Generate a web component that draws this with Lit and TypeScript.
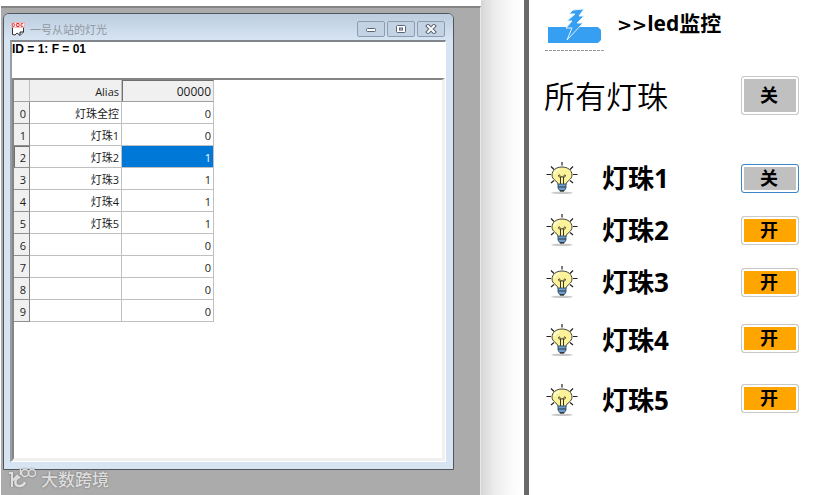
import { LitElement, html, css, svg } from "lit";
import { customElement, state } from "lit/decorators.js";
import { classMap } from "lit/directives/class-map.js";

interface Lamp {
  name: string;
  off: boolean;
  focused?: boolean;
  roomy?: boolean;
}

@customElement("register-window")
export class RegisterWindow extends LitElement {
  static styles = css`
    :host {
      display: flex;
      flex-direction: column;
      box-sizing: border-box;
      border: 1px solid #50565e;
      border-radius: 6px 6px 0 0;
      background: #d7e4f2;
      padding: 0 7px 7px 6px;
      overflow: hidden;
      font-family: "Noto Sans CJK SC", sans-serif;
    }
    .titlebar {
      display: flex;
      align-items: center;
      height: 26px;
      flex: none;
      margin: 0 -7px 0 -6px;
      padding: 4px 8px 0 7px;
      box-sizing: border-box;
      background: linear-gradient(#bccddf, #d7e4f2);
    }
    .doc {
      width: 14px;
      height: 14px;
      flex: none;
    }
    .title {
      flex: 1;
      margin: 0 0 0 5px;
      font-size: 11px;
      font-weight: 400;
      line-height: 16px;
      color: #9097a0;
    }
    .controls {
      display: flex;
      gap: 2px;
    }
    .controls button {
      width: 28px;
      height: 16px;
      padding: 0;
      display: grid;
      place-items: center;
      border: 1px solid #8d9cb3;
      border-radius: 2px;
      background: #c4d3e4;
    }
    .controls svg {
      width: 12px;
      height: 10px;
      display: block;
    }
    .client {
      flex: 1;
      display: flex;
      flex-direction: column;
      border: 1px solid #ffffff;
      border-top: 2px solid #82868c;
      border-left: 2px solid #9a9da2;
      background: #ffffff;
    }
    .status {
      margin: 0;
      height: 36px;
      font: bold 12px/14px "Liberation Sans", Arial, sans-serif;
      color: #000000;
    }
    .sheet {
      flex: 1;
      border-top: 2px solid #858585;
      border-left: 2px solid #858585;
      border-right: 3px solid #f0f0f0;
      border-bottom: 3px solid #f0f0f0;
    }
    table {
      border-collapse: separate;
      border-spacing: 0;
      table-layout: fixed;
      width: 200px;
      font-family: "Open Sans", "Noto Sans CJK SC", sans-serif;
      font-size: 11px;
      line-height: 16px;
      color: #1c1c1c;
    }
    .index {
      width: 16px;
    }
    th,
    td {
      box-sizing: border-box;
      height: 22px;
      padding: 2px 2px 0 0;
      text-align: right;
      font-weight: 400;
      border-right: 1px solid #c0c0c0;
      border-bottom: 1px solid #c0c0c0;
      white-space: nowrap;
    }
    thead th {
      background: #f0f0f0;
      border-bottom-color: #a0a0a0;
    }
    thead .address {
      border-left: 1px solid #707070;
      border-top: 1px solid #707070;
      padding-top: 1px;
      font-size: 12px;
    }
    tbody th {
      background: #f0f0f0;
      border-right-color: #808080;
      border-bottom-color: #909090;
      padding: 2px 3px 0 0;
    }
    tbody .current th {
      border-left: 1px solid #707070;
      border-top: 1px solid #707070;
      padding-top: 1px;
    }
    .current .value {
      background: #0078d7;
      color: #ffffff;
    }
  `;

  private rows = [
    ["灯珠全控", 0],
    ["灯珠1", 0],
    ["灯珠2", 1],
    ["灯珠3", 1],
    ["灯珠4", 1],
    ["灯珠5", 1],
    ["", 0],
    ["", 0],
    ["", 0],
    ["", 0],
  ];

  render() {
    return html`
      <header class="titlebar">
        <svg class="doc" viewBox="0 0 14 14" aria-hidden="true">
          <path d="M1.500 1H12.500V10L9.500 13L7 11.500L4 13L1.500 12Z" fill="#fff" />
          <path d="M1.500 5V12.500L4 13L6 11L9 13.500L12.500 10V5" fill="none" stroke="#333" />
          <path d="M9 13V10H12.500" fill="#ddd" stroke="#222" />
          <path d="M.500 .500H13.500V5.500H.500Z" fill="#fff" stroke="#e78a8a" stroke-width=".500" />
          <path d="M1.700 1.500V4.500H2.700L3.900 3.500V2.500L2.700 1.500ZM5.700 1.500H8V4.500H5.700ZM12.300 1.700H10V4.300H12.300" fill="none" stroke="#e01818" stroke-width=".900" />
        </svg>
        <h2 class="title">一号从站的灯光</h2>
        <div class="controls">
          <button aria-label="最小化">
            <svg viewBox="0 0 12 10"><rect x="1.500" y="4.500" width="9" height="3" rx="1" fill="#fff" stroke="#5b6474" /></svg>
          </button>
          <button aria-label="最大化">
            <svg viewBox="0 0 12 10">
              <rect x="1.500" y="1.500" width="9" height="7" rx="1" fill="#fff" stroke="#5b6474" />
              <rect x="4.500" y="4" width="3" height="2" fill="#c4d3e4" stroke="#5b6474" />
            </svg>
          </button>
          <button aria-label="关闭">
            <svg viewBox="0 0 12 10">
              <path d="M3 2L9 8M9 2L3 8" stroke="#5b6474" stroke-width="4" stroke-linecap="square" />
              <path d="M3 2L9 8M9 2L3 8" stroke="#fff" stroke-width="2" stroke-linecap="square" />
            </svg>
          </button>
        </div>
      </header>
      <div class="client">
        <p class="status">ID = 1: F = 01</p>
        <div class="sheet">
          <table>
            <colgroup>
              <col class="index" />
              <col />
              <col />
            </colgroup>
            <thead>
              <tr>
                <th></th>
                <th scope="col">Alias</th>
                <th scope="col" class="address">00000</th>
              </tr>
            </thead>
            <tbody>
              ${this.rows.map(
                ([alias, value], i) => html`<tr class=${classMap({ current: i === 2 })}>
                  <th scope="row">${i}</th>
                  <td>${alias}</td>
                  <td class="value">${value}</td>
                </tr>`
              )}
            </tbody>
          </table>
        </div>
      </div>
    `;
  }
}

const bulb = svg`
  <ellipse cx="16" cy="30.800" rx="11" ry="1.200" fill="#c9c9c9" />
  <path d="M16 0V3.500M5 4.500L8 7.500M27 4.500L24 7.500M.500 12.500H5M27 12.500H31.500M5 21L8 18.500M27 21L24 18.500" stroke="#222" stroke-width="1.200" fill="none" />
  <path d="M16 5C10 5 6 8.500 6 13C6 18 11.500 18.500 12 22.500H20C20.500 18.500 26 18 26 13C26 8.500 22 5 16 5Z" fill="#fbf29a" stroke="#45453a" stroke-width="1" />
  <path d="M8.500 12C9 9.500 11 8 13.500 7.500" fill="none" stroke="#fffde0" stroke-width="1.600" />
  <path d="M14.500 22V15C12 15.500 12 12.500 13.500 13C14.500 13.300 14 15 16 15C18 15 17.500 13.300 18.500 13C20 12.500 20 15.500 17.500 15V22" fill="none" stroke="#3a3528" stroke-width="1" />
  <path d="M12 22H20V26L18.500 28.500H13.500L12 26Z" fill="#6f9fcb" stroke="#35506e" stroke-width=".900" />
  <path d="M12 25H20" stroke="#24384f" stroke-width="1" />
  <path d="M14 29H18" stroke="#222" stroke-width="1.200" />
`;

@customElement("lamp-panel")
export class LampPanel extends LitElement {
  static styles = css`
    :host {
      display: block;
      padding: 0 29px 0 15px;
      font-family: "Open Sans", "Noto Sans CJK SC", sans-serif;
      color: #000000;
    }
    .heading {
      display: flex;
      align-items: center;
      gap: 12px;
      height: 52px;
      padding-left: 1px;
    }
    .logo {
      width: 60px;
      height: 52px;
      flex: none;
    }
    h1 {
      margin: 0;
      padding-bottom: 4px;
      font-size: 21px;
      line-height: 28px;
      font-weight: 700;
      white-space: nowrap;
    }
    .chevrons {
      font-family: "DejaVu Sans", sans-serif;
      font-size: 18px;
    }
    .all {
      display: flex;
      align-items: center;
      justify-content: space-between;
      height: 86px;
      margin-bottom: 14px;
    }
    h2 {
      margin: 0;
      font-family: "Noto Sans CJK SC", sans-serif;
      font-size: 31px;
      line-height: 40px;
      font-weight: 350;
    }
    ul {
      list-style: none;
      margin: 0;
      padding: 0;
    }
    li {
      display: flex;
      align-items: center;
      height: 52px;
    }
    li.roomy {
      height: 60px;
    }
    .bulb {
      width: 32px;
      height: 32px;
      margin-left: 2px;
      flex: none;
    }
    .name {
      flex: 1;
      margin-left: 24px;
      font-size: 26px;
      line-height: 36px;
      font-weight: 700;
    }
    .roomy .bulb,
    .roomy .name {
      padding-top: 4px;
    }
    button {
      width: 58px;
      height: 29px;
      padding: 0 2px 2px 0;
      box-sizing: border-box;
      border: 1px solid #c8c8c8;
      border-radius: 3px;
      background: #ffa500;
      box-shadow: inset 0 0 0 2px #ffffff;
      font: bold 18px/22px "Noto Sans CJK SC", sans-serif;
      color: #000000;
    }
    button.off {
      background: #c0c0c0;
    }
    button.focused {
      border-color: #3a86c8;
    }
    button.large {
      height: 39px;
    }
  `;

  @state() private allOff = true;
  @state() private lamps: Lamp[] = [
    { name: "灯珠1", off: true, focused: true },
    { name: "灯珠2", off: false },
    { name: "灯珠3", off: false },
    { name: "灯珠4", off: false, roomy: true },
    { name: "灯珠5", off: false, roomy: true },
  ];

  private toggle(index: number) {
    this.lamps = this.lamps.map((lamp, i) => ({
      ...lamp,
      off: i === index ? !lamp.off : lamp.off,
      focused: i === index,
    }));
  }

  render() {
    return html`
      <header class="heading">
        <svg class="logo" viewBox="0 0 60 52" aria-hidden="true">
          <path d="M3 27H53L56 30V40L53 43H3Z" fill="#369ff2" />
          <path d="M28 10L39 9L34 16H39L32 23H38L22 40L27 28H21L27 21H22L30 14H24Z" fill="#369ff2" stroke="#e4f4ff" stroke-width="1" />
          <path d="M0 50.500H60" stroke="#999" stroke-dasharray="3 1" />
        </svg>
        <h1><span class="chevrons">&gt;&gt;</span>led监控</h1>
      </header>
      <section class="all">
        <h2>所有灯珠</h2>
        <button
          class=${classMap({ large: true, off: this.allOff })}
          aria-label="所有灯珠 ${this.allOff ? "关" : "开"}"
          @click=${() => (this.allOff = !this.allOff)}
        >
          ${this.allOff ? "关" : "开"}
        </button>
      </section>
      <ul>
        ${this.lamps.map(
          (lamp, i) => html`<li class=${classMap({ roomy: !!lamp.roomy })}>
            <svg class="bulb" viewBox="0 0 32 32" aria-hidden="true">${bulb}</svg>
            <span class="name" id="lamp-${i}">${lamp.name}</span>
            <button
              class=${classMap({ off: lamp.off, focused: !!lamp.focused })}
              aria-describedby="lamp-${i}"
              @click=${() => this.toggle(i)}
            >
              ${lamp.off ? "关" : "开"}
            </button>
          </li>`
        )}
      </ul>
    `;
  }
}

@customElement("app-root")
export class AppRoot extends LitElement {
  static styles = css`
    :host {
      display: grid;
      grid-template-columns: minmax(0, 481fr) 43px 5px minmax(0, 299fr);
      min-height: 100vh;
      background: #ffffff;
    }
    .workspace {
      position: relative;
      display: flex;
      flex-direction: column;
      box-sizing: border-box;
      margin: 6px 0 0 1px;
      padding: 5px 26px 25px 2px;
      border-top: 2px solid #858585;
      border-right: 1px solid #e8e8e8;
      background: #ababab;
    }
    register-window {
      flex: 1;
    }
    .shade {
      background: linear-gradient(90deg, #d6d6d6, #ececec 30%, #fafafa 70%, #ffffff);
    }
    .divider {
      background: #696969;
    }
    .watermark {
      position: absolute;
      left: 6px;
      bottom: 4px;
      display: flex;
      align-items: center;
      gap: 4px;
      font: 500 17px/24px "Noto Sans CJK SC", sans-serif;
      color: #dedede;
      text-shadow: 0 0 2px #6a6a6a;
    }
    .watermark svg {
      width: 30px;
      height: 22px;
      filter: drop-shadow(0 0 1px #777777);
    }
  `;

  render() {
    return html`
      <main class="workspace">
        <register-window></register-window>
        <div class="watermark">
          <svg viewBox="0 0 30 22" fill="none" stroke="#dedede" aria-hidden="true">
            <path d="M2 5H5V19M5 13L11 7" stroke-width="2" />
            <path d="M13 9C7 10 7 18 12 18C15 18 17 17 18 14" stroke-width="2.500" />
            <path d="M13.500 1V7" stroke-width="1.500" />
            <circle cx="18" cy="5" r="3.500" stroke-width="1.500" />
            <circle cx="25" cy="5" r="3.500" stroke-width="1.500" />
          </svg>
          <span>大数跨境</span>
        </div>
      </main>
      <div class="shade"></div>
      <div class="divider"></div>
      <lamp-panel></lamp-panel>
    `;
  }
}
